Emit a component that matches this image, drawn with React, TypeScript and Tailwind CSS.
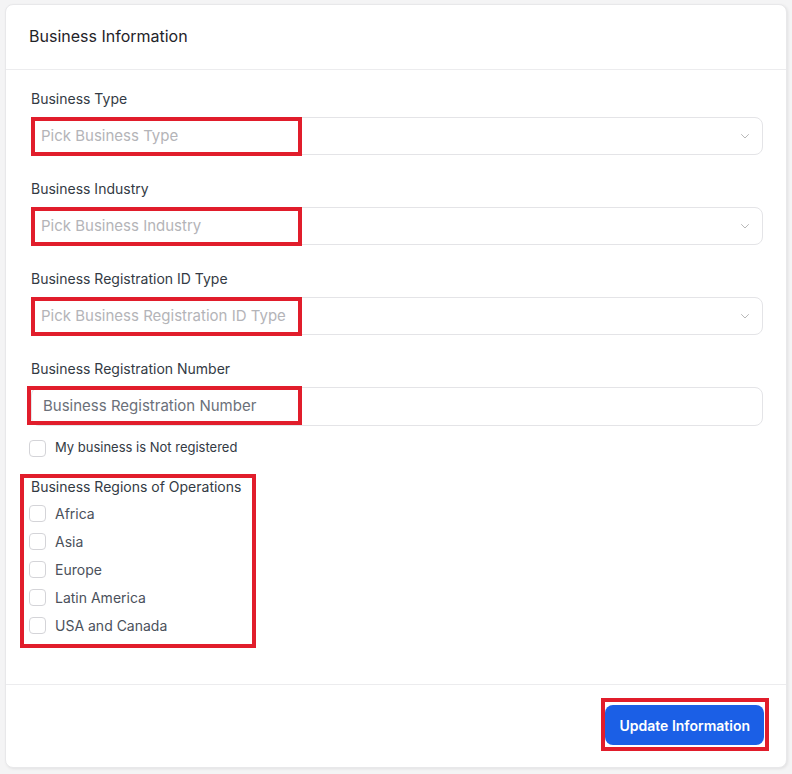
import React from "react";

function Chevron() {
  return (
    <svg width="12" height="12" viewBox="0 0 12 12" fill="none" className="text-[#b8b8b8]">
      <path d="M2.5 4.5 6 8l3.5-3.5" stroke="currentColor" strokeWidth="1" strokeLinecap="round" strokeLinejoin="round" />
    </svg>
  );
}

function Box() {
  return <span className="block w-[17px] h-[17px] rounded-[4px] border border-[#d4d4d8] bg-white shrink-0" />;
}

function SelectField({ label, placeholder, redWidth }: { label: string; placeholder: string; redWidth: number }) {
  return (
    <div className="flex flex-col">
      <div className="h-[20px] leading-[20px] text-[14px] text-[#333a44]">{label}</div>
      <div className="relative mt-[8px] h-[38px] rounded-[8px] border border-[#e4e4e7] bg-white flex items-center pl-[9px] pr-[11px]">
        <span className="flex-1 text-[15px] text-[#b4b4b8]">{placeholder}</span>
        <Chevron />
        <div
          className="absolute left-[-1px] top-[-1px] h-[39px] border-[4px] border-[#e11d2b] pointer-events-none"
          style={{ width: redWidth }}
        />
      </div>
    </div>
  );
}

export default function App() {
  const regions = ["Africa", "Asia", "Europe", "Latin America", "USA and Canada"];
  return (
    <div
      className="w-[792px] h-[774px] bg-[#f4f4f5] pt-[4px] pl-[5px]"
      style={{ fontFamily: "Inter, 'Noto Sans', sans-serif" }}
    >
      <div className="w-[782px] h-[764px] bg-white rounded-[8px] border border-[#e8e8ea] shadow-[1px_1px_3px_rgba(0,0,0,0.08)] flex flex-col">
        <div className="h-[65px] border-b border-[#ececee] flex items-center pl-[23px] pb-[3px] text-[16px] text-[#1f2329]">
          Business Information
        </div>
        <div className="flex-1 pt-[19px] pl-[25px] pr-[23px] flex flex-col">
          <SelectField label="Business Type" placeholder="Pick Business Type" redWidth={271} />
          <div className="h-[24px]" />
          <SelectField label="Business Industry" placeholder="Pick Business Industry" redWidth={271} />
          <div className="h-[24px]" />
          <SelectField label="Business Registration ID Type" placeholder="Pick Business Registration ID Type" redWidth={271} />
          <div className="h-[24px]" />
          <div className="flex flex-col">
            <div className="h-[20px] leading-[20px] text-[14px] text-[#333a44]">Business Registration Number</div>
            <div className="relative mt-[8px] h-[39px] rounded-[8px] border border-[#e4e4e7] bg-white flex items-center pl-[11px]">
              <span className="text-[15px] text-[#6b7079]">Business Registration Number</span>
              <div className="absolute left-[-5px] top-[-2px] w-[275px] h-[39px] border-[4px] border-[#e11d2b] pointer-events-none" />
            </div>
          </div>
          <label className="mt-[13px] ml-[-2px] flex items-center gap-[9px] h-[18px]">
            <Box />
            <span className="text-[13px] text-[#333a44]">My business is Not registered</span>
          </label>
          <div className="relative mt-[20px] self-start flex flex-col">
            <div className="h-[20px] leading-[20px] text-[14px] text-[#333a44]">Business Regions of Operations</div>
            <div className="mt-[8px] flex flex-col gap-[11px]">
              {regions.map((r) => (
                <label key={r} className="ml-[-2px] flex items-center gap-[9px] h-[17px]">
                  <Box />
                  <span className="text-[14px] text-[#4b515b]">{r}</span>
                </label>
              ))}
            </div>
            <div className="absolute left-[-11px] top-[-3px] w-[236px] h-[174px] border-[4px] border-[#e11d2b] pointer-events-none" />
          </div>
        </div>
        <div className="h-[83px] border-t border-[#ececee] flex items-start justify-end pr-[22px] pt-[20px]">
          <div className="relative">
            <button className="h-[40px] px-[14px] rounded-[8px] bg-[#1b5fe6] text-white text-[14px] font-semibold">
              Update Information
            </button>
            <div className="absolute left-[-4px] top-[-7px] right-[-5px] bottom-[-6px] border-[4px] border-[#e11d2b] pointer-events-none" />
          </div>
        </div>
      </div>
    </div>
  );
}
